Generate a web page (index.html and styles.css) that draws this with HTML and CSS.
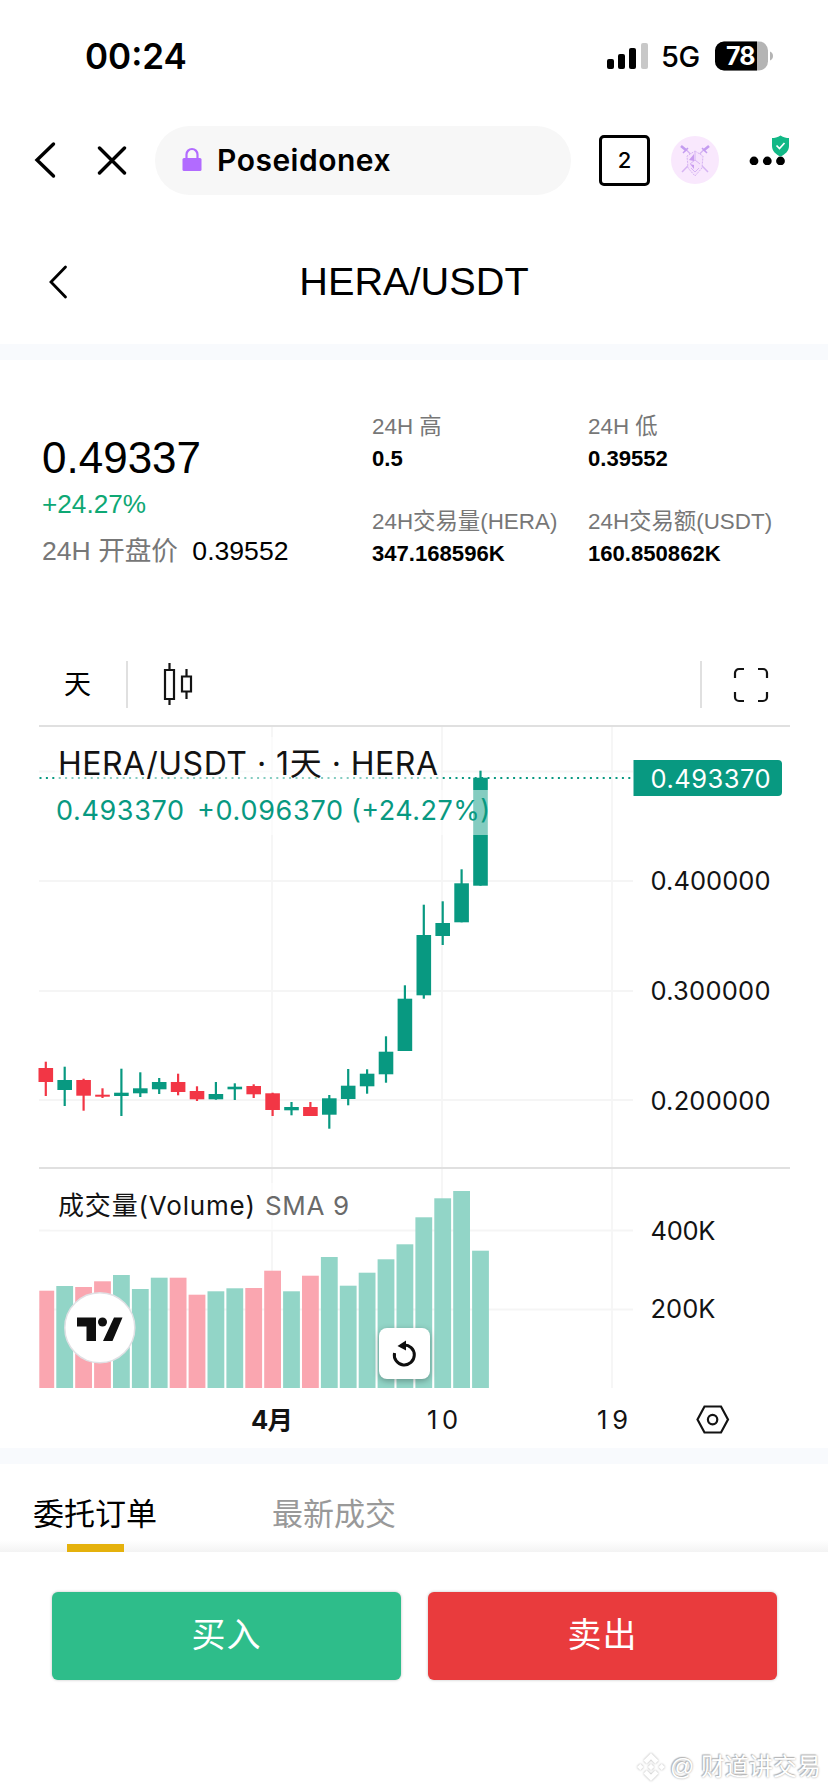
FILE: index.html
```html
<!DOCTYPE html>
<html lang="zh-CN">
<head>
    <meta charset="UTF-8">
    <title>HERA/USDT</title>
    <link rel="stylesheet" href="styles.css">
</head>
<body>
    <div id="status">
        <span class="time">00:24</span>
        <div class="signal">
            <svg width="28" height="28" viewBox="0 0 28 28">
                <rect x="0" y="17" width="7" height="10" rx="2"/>
                <rect x="11" y="12" width="7" height="15" rx="2"/>
                <rect x="22" y="6" width="7" height="21" rx="2"/>
                <rect x="34" y="1" width="7" height="26" rx="2" fill="#c8c8c8"/>
            </svg>
            <span class="net">5G</span>
            <svg class="battery" width="60" height="30" viewBox="0 0 60 30">
                <rect x="0" y="0.5" width="53" height="29" rx="9" fill="#b4b4b4"/>
                <path d="M9 .5h33v29H9a9 9 0 0 1-9-9v-11a9 9 0 0 1 9-9z"/>
                <path d="M55 10.500c4 1.500 4 7.500 0 9z" fill="#b4b4b4"/>
                <text x="11" y="23.500">78</text>
            </svg>
        </div>
    </div>

    <div id="browser">
        <svg class="nav-back" width="24" height="38" viewBox="0 0 24 38"><path d="M20.500 3 4 19l16.500 16"/></svg>
        <svg class="nav-close" width="30" height="30" viewBox="0 0 30 30"><path d="M2.500 3l25 25M27.500 3l-25 25"/></svg>
        <div class="address">
            <svg width="20" height="26" viewBox="0 0 20 26">
                <path d="M4.500 12V7.500a5.500 5.500 0 0 1 11 0V12" fill="none" stroke="#b26bff" stroke-width="2.200"/>
                <rect x="0.500" y="11" width="19" height="13" rx="1.500" fill="#b26bff"/>
            </svg>
            <span>Poseidonex</span>
        </div>
        <span class="tabs-count">2</span>
        <svg class="avatar" width="48" height="48" viewBox="0 0 48 48">
            <circle cx="24" cy="24" r="24" fill="#f9e8fd"/>
            <g fill="none" stroke="#d6b4f3" stroke-width="1.500">
                <path d="M11 36 33.500 13M37 36 14.500 13"/>
                <path d="M10 10l5.500 4.500M38 10l-5.500 4.500" stroke="#c49cf0" stroke-width="2.600"/>
                <path d="M12 17l5-5M36 17l-5-5" stroke="#c49cf0"/>
                <path d="M24 15l8 5-1 12-7 8-7-8-1-12z" fill="#f6e2fc" stroke-width="1" stroke-dasharray="2 1"/>
                <path d="M24 16v8l-5 4M24 24l5 4M20 32l4 4 4-4" stroke-width="1"/>
            </g>
            <path d="M23 18v7l-5-1zM19 28l4 5v-4z" fill="#c99cf0"/>
        </svg>
        <svg class="more" width="40" height="30" viewBox="0 0 40 30">
            <circle cx="5" cy="26" r="4.400"/><circle cx="18.300" cy="26" r="4.400"/><circle cx="31.500" cy="26" r="4.400"/>
            <path d="M31.500.500c3 2 6 2.500 8.500 2.500v8c0 5-4 8.500-8.500 10.500-4.500-2-8.500-5.500-8.500-10.500V3c2.500 0 5.500-.5 8.500-2.500z" fill="#12b886"/>
            <path d="M27.500 10.500l3 3 5-5.500" fill="none" stroke="#fff" stroke-width="1.700"/>
        </svg>
    </div>

    <div id="header">
        <svg width="22" height="36" viewBox="0 0 22 36"><path d="M18.500 3 4 18l14.500 15"/></svg>
        <h1>HERA/USDT</h1>
    </div>

    <div id="ticker">
        <div class="price">
            <p class="last">0.49337</p>
            <p class="change">+24.27%</p>
            <p class="open">24H 开盘价 <b>0.39552</b></p>
        </div>
        <dl>
            <dt>24H 高</dt>
            <dd>0.5</dd>
            <dt>24H交易量(HERA)</dt>
            <dd>347.168596K</dd>
        </dl>
        <dl>
            <dt>24H 低</dt>
            <dd>0.39552</dd>
            <dt>24H交易额(USDT)</dt>
            <dd>160.850862K</dd>
        </dl>
    </div>

    <div id="toolbar">
        <span class="interval">天</span>
        <svg class="candle-icon" width="30" height="46" viewBox="0 0 30 46">
            <path d="M2 9h9v29H2zM6.500 2v7M6.500 38v6M19 15.500h9v15h-9zM23.500 8v7.500M23.500 30.500V38"/>
        </svg>
        <div class="full">
            <svg width="36" height="36" viewBox="0 0 36 36">
                <path d="M2 11V6a4 4 0 0 1 4-4h5M25 2h5a4 4 0 0 1 4 4v5M34 25v5a4 4 0 0 1-4 4h-5M11 34H6a4 4 0 0 1-4-4v-5"/>
            </svg>
        </div>
    </div>

    <!-- viewBox keeps the page coordinates, candle values are in the same units -->
    <svg id="chart" width="828" height="721" viewBox="0 727 828 721">
        <g class="grid">
            <path d="M272 727v661M442 727v661M612 727v661"/>
            <path d="M39 771.500h594M39 881h594M39 991h594M39 1100h594M39 1230.500h594M39 1309.500h594"/>
        </g>
        <path class="split" d="M39 1168h751"/>
        <g id="volume"></g>
        <path class="last-line" d="M39.500 778H633"/>
        <g id="candles"></g>

        <rect class="veil" x="55" y="737" width="386" height="53"/>
        <rect class="veil" x="50" y="790" width="440" height="45"/>
        <rect class="veil" x="50" y="1183" width="308" height="47"/>

        <text class="name" x="58" y="775" textLength="380">HERA/USDT · 1天 · HERA</text>
        <text class="up" x="56" y="820" textLength="128">0.493370</text>
        <text class="up" x="197" y="820" textLength="146">+0.096370</text>
        <text class="up" x="351" y="820" textLength="139">(+24.27%)</text>
        <text class="study" x="58" y="1215" textLength="197">成交量(Volume)</text>
        <text class="study dim" x="265" y="1215" textLength="84">SMA 9</text>

        <path class="tag" d="M633.500 760H778a4 4 0 0 1 4 4v28a4 4 0 0 1-4 4H633.500z"/>
        <text class="axis on-tag" x="650.500" y="788" textLength="120">0.493370</text>
        <text class="axis" x="650.500" y="890" textLength="120">0.400000</text>
        <text class="axis" x="650.500" y="1000" textLength="120">0.300000</text>
        <text class="axis" x="650.500" y="1109.500" textLength="120">0.200000</text>
        <text class="axis" x="650.500" y="1239.500" textLength="65">400K</text>
        <text class="axis" x="650.500" y="1318" textLength="65">200K</text>
        <text class="axis month" x="251" y="1428.500" textLength="42">4月</text>
        <text class="axis" x="427" y="1428.500" textLength="31">10</text>
        <text class="axis" x="597" y="1428.500" textLength="31">19</text>

        <g class="gear">
            <path d="M704.500 1406.500h16.500l7 13-7 13h-16.500l-7-13z"/>
            <circle cx="712.600" cy="1419.600" r="4.700"/>
        </g>

        <circle cx="99.800" cy="1327.800" r="35" fill="#fff" stroke="#e0e0e4" stroke-width="1.500"/>
        <path d="M77 1317.500h19v23.500h-9.500v-14.500H77zM114 1317.500h8.500l-10 23.500H103z" fill="#0f0f0f"/>
        <circle cx="102.500" cy="1322" r="4.500" fill="#0f0f0f"/>

        <rect class="reset" x="379" y="1328" width="51" height="51" rx="8"/>
        <path d="M394.500 1353a10 10 0 1 0 9-8" fill="none" stroke="#0f0f0f" stroke-width="3"/>
        <path d="M397.500 1346l8.500-5.500v10z" fill="#0f0f0f"/>
    </svg>

    <div id="orders">
        <span class="active">委托订单</span>
        <span>最新成交</span>
    </div>

    <div id="trade">
        <a class="buy">买入</a>
        <a class="sell">卖出</a>
    </div>

    <div id="mark">
        <svg width="30" height="30" viewBox="0 0 28 28">
            <path d="M14 1l7 7-3 3-4-4-4 4-3-3zM14 27l7-7-3-3-4 4-4-4-3 3zM4 11l3 3-3 3-3-3zM24 11l3 3-3 3-3-3zM14 11l3 3-3 3-3-3z"/>
        </svg>
        <span>@ 财道讲交易</span>
    </div>

<script>
// up?, high, body top, body bottom, low, volume top
var data = [
    [0, 1061.7, 1068, 1082, 1096, 1290.7],
    [1, 1066.7, 1080, 1090, 1106, 1286],
    [0, 1078.7, 1080, 1095.7, 1110.7, 1287],
    [0, 1088.3, 1094.7, 1096.7, 1098, 1281.3],
    [1, 1068.7, 1092.7, 1096, 1116, 1275],
    [1, 1072.3, 1088.3, 1093.3, 1097, 1289],
    [1, 1078, 1082, 1089.3, 1094, 1277.7],
    [0, 1073.7, 1082, 1092, 1095.3, 1277.7],
    [0, 1086.3, 1091, 1099.3, 1101, 1294.7],
    [1, 1082, 1094, 1099.3, 1099.7, 1291.3],
    [1, 1083.3, 1086.7, 1089.3, 1100, 1288.3],
    [0, 1084.3, 1086, 1094.3, 1098, 1288],
    [0, 1092.7, 1093.3, 1110, 1116, 1270.7],
    [1, 1102, 1107, 1110.3, 1115.3, 1291.3],
    [0, 1102, 1107, 1116, 1116, 1275.7],
    [1, 1095, 1098.3, 1114.7, 1128.7, 1257],
    [1, 1069, 1085.7, 1099, 1105.3, 1285.7],
    [1, 1069.3, 1073.7, 1086.3, 1093.7, 1272.7],
    [1, 1036.3, 1051.7, 1074.3, 1082.7, 1259.3],
    [1, 985.3, 998.7, 1051, 1051, 1244.3],
    [1, 904.7, 935, 995.3, 998.7, 1217.3],
    [1, 901.3, 923, 936, 945, 1198.3],
    [1, 869.3, 883.3, 922.3, 922.3, 1191],
    [1, 770.7, 777.7, 885.7, 885.7, 1250.7]
];
var candles = document.getElementById("candles");
var volume = document.getElementById("volume");

function bar(parent, cls, x, top, w, bottom){
    var r = document.createElementNS("http://www.w3.org/2000/svg", "rect");
    r.setAttribute("class", cls);
    r.setAttribute("x", x);
    r.setAttribute("y", top);
    r.setAttribute("width", w);
    r.setAttribute("height", bottom - top);
    parent.appendChild(r);
}

for(var i=0; i<data.length; i++){
    var d = data[i];
    var x = 45.8 + 18.9*i;
    var cls = d[0] ? "rise" : "fall";
    var left = Math.max(39.3, x - 8.4);
    bar(volume, cls, left, d[5], x + 8.4 - left, 1388);
    bar(candles, cls, x - 1.1, d[1], 2.2, d[4]);
    bar(candles, cls, x - 7.3, d[2], 14.6, d[3]);
}
</script>
</body>
</html>
```
FILE: styles.css
```css
body, h1, p, dl, dd {
    margin: 0;
    padding: 0;
}
body {
    width: 828px;
    height: 1792px;
    overflow: hidden;
    background: #fff;
    color: #000;
    font-family: "Liberation Sans", "Noto Sans CJK SC", sans-serif;
    position: relative;
}
svg {
    display: block;
    flex: none;
}

#status {
    height: 111px;
    box-sizing: border-box;
    padding: 0 53px 0 85px;
    display: flex;
    justify-content: space-between;
    align-items: center;
    font-family: Inter, sans-serif;
}
.time {
    font-size: 35px;
    font-weight: 600;
    line-height: 40px;
}
.signal {
    display: flex;
    align-items: center;
}
.signal svg {
    overflow: visible;
}
.net {
    margin: 2px 14px 0 26px;
    font-size: 29px;
    font-weight: 500;
    width: 40px;
    letter-spacing: -0.5px;
}
.battery text {
    fill: #fff;
    font-size: 25px;
    font-weight: 700;
    letter-spacing: -1px;
}

#browser {
    height: 98px;
    display: flex;
    align-items: center;
    font-family: Inter, sans-serif;
}
#browser .nav-back, #browser .nav-close, #header svg {
    fill: none;
    stroke: #000;
    stroke-width: 3.4;
    stroke-linecap: round;
}
.nav-back {
    margin-left: 33px;
}
.nav-close {
    margin-left: 40px;
}
.address {
    width: 416px;
    height: 69px;
    margin-left: 28px;
    box-sizing: border-box;
    padding-left: 27px;
    border-radius: 35px;
    background: #f7f7f7;
    display: flex;
    align-items: center;
    gap: 15px;
    font-size: 30px;
    font-weight: 600;
    letter-spacing: 0.5px;
}
.tabs-count {
    width: 45px;
    height: 45px;
    margin-left: 28px;
    border: 3px solid #000;
    border-radius: 5px;
    line-height: 45px;
    text-align: center;
    font-size: 22px;
    font-weight: 500;
}
.avatar {
    margin-left: 21px;
}
.more {
    margin: -20px 0 0 30px;
}

#header {
    height: 135px;
    display: flex;
    align-items: center;
    position: relative;
}
#header svg {
    margin: 11px 0 0 47px;
    stroke-width: 2.8;
}
#header h1 {
    width: 690px;
    margin: 9px 0 0 0;
    text-align: center;
    font-size: 39.7px;
    font-weight: normal;
}

#ticker {
    height: 271px;
    border-top: 16px solid #f8fafd;
    display: flex;
}
.price {
    width: 330px;
    padding: 75px 0 0 42px;
}
.last {
    font-size: 44px;
    line-height: 46px;
}
.change {
    margin-top: 8px;
    font-size: 26.2px;
    line-height: 30px;
    color: #0ea874;
}
.open {
    margin-top: 17px;
    font-size: 26.6px;
    line-height: 30px;
    color: #777;
}
.open b {
    margin-left: 7px;
    font-weight: normal;
    color: #000;
}
#ticker dl {
    width: 216px;
    padding-top: 54px;
    font-size: 22.1px;
    line-height: 26px;
    white-space: nowrap;
}
#ticker dt {
    font-size: 22.4px;
    color: #777;
}
#ticker dd {
    margin: 6px 0 37px;
    font-weight: bold;
}

#toolbar {
    height: 94px;
    margin: 0 38px 0 39px;
    border-bottom: 2px solid #e0e0e0;
    display: flex;
    align-items: center;
    font-family: Inter, "Noto Sans CJK SC", sans-serif;
}
#toolbar svg {
    fill: none;
    stroke: #131313;
    stroke-width: 2.2;
}
.interval {
    width: 62px;
    padding-left: 25px;
    border-right: 2px solid #e0e0e0;
    line-height: 47px;
    font-size: 27px;
    margin-top: 13px;
}
.candle-icon {
    margin: 12px 0 0 35px;
}
.full {
    height: 47px;
    margin: 13px 21px 0 auto;
    padding-left: 31px;
    border-left: 2px solid #e0e0e0;
    display: flex;
    align-items: center;
}

#chart {
    font-family: Inter, "Noto Sans CJK SC", sans-serif;
}
#chart .grid path {
    stroke: #f5f5f5;
    stroke-width: 1.8;
}
#chart .split {
    stroke: #e0e0e0;
    stroke-width: 2;
}
.rise {
    fill: #089981;
}
.fall {
    fill: #f23645;
}
#volume .rise {
    fill: #92d5c7;
}
#volume .fall {
    fill: #faa6b0;
}
.last-line {
    stroke: #089981;
    stroke-width: 2;
    stroke-dasharray: 2 4.4;
}
.veil {
    fill: #fff;
    opacity: .5;
}
#chart .name {
    font-size: 32px;
    fill: #131313;
}
#chart .up {
    font-size: 27px;
    fill: #089981;
}
#chart .study {
    font-size: 26px;
    fill: #131313;
}
#chart .dim {
    fill: #6a6a6a;
}
#chart .axis {
    font-size: 25.5px;
    fill: #131313;
}
#chart .on-tag {
    fill: #fff;
}
#chart .month {
    font-weight: 700;
}
.tag {
    fill: #089981;
}
.gear {
    fill: none;
    stroke: #131313;
    stroke-width: 2.2;
}
.reset {
    fill: #fff;
    filter: drop-shadow(0 2px 3px rgba(0, 0, 0, .3));
}

#orders {
    height: 104px;
    box-sizing: border-box;
    border-top: 16px solid #f8fafd;
    padding-left: 33px;
    display: flex;
    gap: 115px;
    font-size: 31px;
    line-height: 101px;
    color: #999;
    background: linear-gradient(#fff 76px, #f3f3f3 88px);
}
#orders .active {
    color: #000;
    background: linear-gradient(#e5b10c, #e5b10c) 34px 80px / 57px 8px no-repeat;
}

#trade {
    height: 240px;
    box-sizing: border-box;
    padding: 40px 51px 0 52px;
    display: flex;
    gap: 27px;
    background: #fff;
}
#trade a {
    flex: 1;
    height: 88px;
    border-radius: 6px;
    line-height: 86px;
    text-align: center;
    font-size: 34px;
    letter-spacing: 1px;
    color: #fff;
    box-shadow: 0 0 3px rgba(0, 0, 0, .25);
}
#trade .buy {
    background: #2ebd8a;
}
#trade .sell {
    background: #e93b3d;
}

/* watermark over the footer */
#mark {
    position: absolute;
    right: 7px;
    bottom: 8px;
    display: flex;
    align-items: center;
    gap: 4px;
    font-size: 24px;
    line-height: 34px;
    color: #fff;
    text-shadow: 0 0 2px #999, -1px -1px 1px #bbb;
}
#mark svg {
    fill: #fff;
    filter: drop-shadow(0 0 1px #aaa);
}
```
